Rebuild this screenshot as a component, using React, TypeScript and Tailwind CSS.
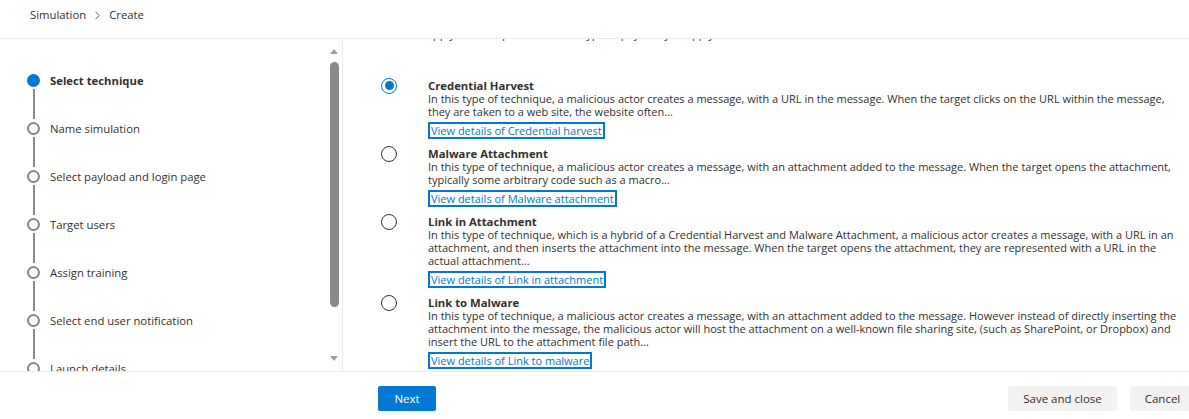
import React from "react";

// ---------------------------------------------------------------------------
// Data
// ---------------------------------------------------------------------------

const STEPS = [
  "Select technique",
  "Name simulation",
  "Select payload and login page",
  "Target users",
  "Assign training",
  "Select end user notification",
  "Launch details",
];

interface Technique {
  title: string;
  description: string;
  link: string;
}

const TECHNIQUES: Technique[] = [
  {
    title: "Credential Harvest",
    description:
      "In this type of technique, a malicious actor creates a message, with a URL in the message. When the target clicks on the URL within the message, they are taken to a web site, the website often...",
    link: "View details of Credential harvest",
  },
  {
    title: "Malware Attachment",
    description:
      "In this type of technique, a malicious actor creates a message, with an attachment added to the message. When the target opens the attachment, typically some arbitrary code such as a macro...",
    link: "View details of Malware attachment",
  },
  {
    title: "Link in Attachment",
    description:
      "In this type of technique, which is a hybrid of a Credential Harvest and Malware Attachment, a malicious actor creates a message, with a URL in an attachment, and then inserts the attachment into the message. When the target opens the attachment, they are represented with a URL in the actual attachment...",
    link: "View details of Link in attachment",
  },
  {
    title: "Link to Malware",
    description:
      "In this type of technique, a malicious actor creates a message, with an attachment added to the message. However instead of directly inserting the attachment into the message, the malicious actor will host the attachment on a well-known file sharing site, (such as SharePoint, or Dropbox) and insert the URL to the attachment file path...",
    link: "View details of Link to malware",
  },
];

const FONT = "font-['Open_Sans','Noto_Sans',sans-serif]";

// ---------------------------------------------------------------------------
// Components
// ---------------------------------------------------------------------------

function StepNav() {
  return (
    <nav className="flex w-[343px] shrink-0 overflow-hidden border-r border-[#edebe9]">
      <ol className="flex flex-1 flex-col pl-[27px] pt-[35px]">
        {STEPS.map((step, i) => (
          <li key={step} className="flex flex-col">
            <div className="flex h-[13px] items-center">
              {i === 0 ? (
                <span className="size-[13px] shrink-0 rounded-full bg-[#0078d4]" />
              ) : (
                <span className="size-[13px] shrink-0 rounded-full border-2 border-[#8a8886] bg-white" />
              )}
              <span
                className={`ml-[10px] whitespace-nowrap text-[11.3px] leading-[13px] text-[#323130] ${
                  i === 0 ? "font-bold" : ""
                }`}
              >
                {step}
              </span>
            </div>
            {i < STEPS.length - 1 && (
              <div className="flex w-[13px] justify-center pb-[3px] pt-[2px]">
                <span className="h-[30px] w-[2px] bg-[#8a8886]" />
              </div>
            )}
          </li>
        ))}
      </ol>

      {/* scrollbar */}
      <div className="mr-[2px] flex w-[12px] flex-col items-center pt-[10px]">
        <span className="h-0 w-0 border-x-[4px] border-b-[5px] border-x-transparent border-b-[#a19f9d]" />
        <span className="mt-[8px] h-[245px] w-[9px] rounded-full bg-[#8a8a86]" />
        <span className="mt-[49px] h-0 w-0 border-x-[4px] border-t-[5px] border-x-transparent border-t-[#a19f9d]" />
      </div>
    </nav>
  );
}

function TechniqueOption({ technique, selected }: { technique: Technique; selected: boolean }) {
  return (
    <label className="flex cursor-pointer items-start">
      <div className="flex h-[13px] w-[16px] shrink-0 items-center">
        {selected ? (
          <span className="flex size-[16px] items-center justify-center rounded-full border border-[#0078d4]">
            <span className="size-[9px] rounded-full bg-[#0078d4]" />
          </span>
        ) : (
          <span className="size-[16px] rounded-full border border-[#323130]" />
        )}
      </div>
      <div className="ml-[31px] w-[756px] text-[11px] leading-[13px] text-[#323130]">
        <div className="text-[11.3px] font-bold">{technique.title}</div>
        <p>{technique.description}</p>
        <a className="mt-[4px] inline-block border-2 border-[#0078d4] px-[1px] text-[#0078d4]">
          {technique.link}
        </a>
      </div>
    </label>
  );
}

export default function App() {
  return (
    <div className={`flex h-[419px] w-[1189px] flex-col overflow-hidden bg-white ${FONT}`}>
      {/* breadcrumb */}
      <header className="flex h-[39px] shrink-0 items-start border-b border-[#edebe9] pl-[30px] pt-[7px] text-[11.3px] leading-[16px] text-[#323130]">
        <span>Simulation</span>
        <svg className="mx-[8px] mt-[4px]" width="7" height="9" viewBox="0 0 7 9" fill="none">
          <path d="M1.5 0.8 L5.2 4.5 L1.5 8.2" stroke="#605e5c" strokeWidth="1" />
        </svg>
        <span>Create</span>
      </header>

      <main className="flex h-[332px] shrink-0">
        <StepNav />

        {/* content pane, scrolled slightly so its intro line sits under the header */}
        <section className="flex flex-1 flex-col overflow-hidden pl-[38px]">
          <p className="-mt-[12px] ml-[45px] whitespace-nowrap text-[11px] leading-[13px] text-[#323130]">
            Apply a technique that fits the type of payload you apply.
          </p>
          <div className="mt-[39px] flex flex-col gap-[8px]">
            {TECHNIQUES.map((t, i) => (
              <TechniqueOption key={t.title} technique={t} selected={i === 0} />
            ))}
          </div>
        </section>
      </main>

      {/* footer */}
      <footer className="flex flex-1 items-start border-t border-[#edebe9] pl-[378px] pt-[14px] text-[11.5px]">
        <button className="h-[25px] w-[58px] rounded-[2px] bg-[#0078d4] text-white">Next</button>
        <button className="ml-auto h-[25px] w-[109px] rounded-[2px] bg-[#f3f2f1] text-[#323130]">
          Save and close
        </button>
        <button className="-mr-[6px] ml-[13px] h-[25px] w-[65px] shrink-0 rounded-[2px] bg-[#f3f2f1] text-[#323130]">
          Cancel
        </button>
      </footer>
    </div>
  );
}
